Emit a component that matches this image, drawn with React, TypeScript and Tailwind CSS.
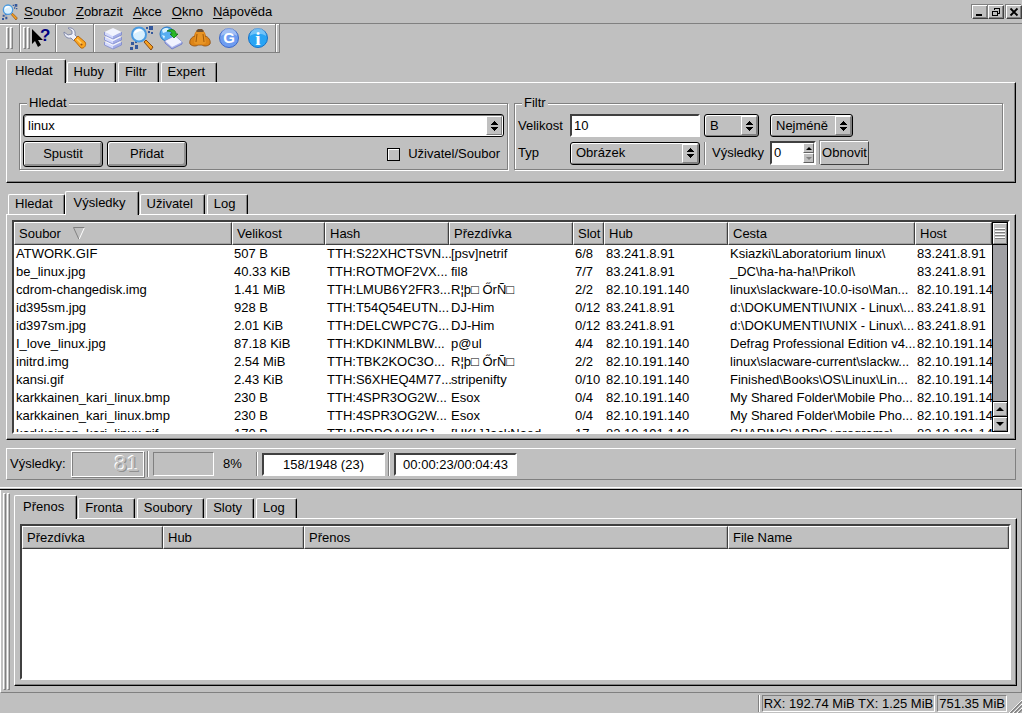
import { useState } from 'react';
import type { ReactNode } from 'react';

const sunken = 'border border-t-[#808080] border-l-[#808080] border-r-white border-b-white';
const frame =
  'border-2 border-t-[#404040] border-l-[#404040] border-r-white border-b-white bg-white';
const headCell =
  'h-[23px] border border-t-white border-l-white border-r-[#404040] border-b-[#404040] bg-[#c0c0c0] pl-1 text-left align-middle font-normal shadow-[inset_-1px_-1px_0_#a0a0a0] overflow-hidden';

const results = [
  ['ATWORK.GIF', '507 B', 'TTH:S22XHCTSVN...', '[psv]netrif', '6/8', '83.241.8.91', 'Ksiazki\\Laboratorium linux\\', '83.241.8.91'],
  ['be_linux.jpg', '40.33 KiB', 'TTH:ROTMOF2VX...', 'fil8', '7/7', '83.241.8.91', '_DC\\ha-ha-ha!\\Prikol\\', '83.241.8.91'],
  ['cdrom-changedisk.img', '1.41 MiB', 'TTH:LMUB6Y2FR3...', 'R¦þ□ ŐrÑ□', '2/2', '82.10.191.140', 'linux\\slackware-10.0-iso\\Man...', '82.10.191.14'],
  ['id395sm.jpg', '928 B', 'TTH:T54Q54EUTN...', 'DJ-Him', '0/12', '83.241.8.91', 'd:\\DOKUMENTI\\UNIX - Linux\\...', '83.241.8.91'],
  ['id397sm.jpg', '2.01 KiB', 'TTH:DELCWPC7G...', 'DJ-Him', '0/12', '83.241.8.91', 'd:\\DOKUMENTI\\UNIX - Linux\\...', '83.241.8.91'],
  ['I_love_linux.jpg', '87.18 KiB', 'TTH:KDKINMLBW...', 'p@ul', '4/4', '82.10.191.140', 'Defrag Professional Edition v4...', '82.10.191.14'],
  ['initrd.img', '2.54 MiB', 'TTH:TBK2KOC3O...', 'R¦þ□ ŐrÑ□', '2/2', '82.10.191.140', 'linux\\slacware-current\\slackw...', '82.10.191.14'],
  ['kansi.gif', '2.43 KiB', 'TTH:S6XHEQ4M77...', 'stripenifty', '0/10', '82.10.191.140', 'Finished\\Books\\OS\\Linux\\Lin...', '82.10.191.14'],
  ['karkkainen_kari_linux.bmp', '230 B', 'TTH:4SPR3OG2W...', 'Esox', '0/4', '82.10.191.140', 'My Shared Folder\\Mobile Pho...', '82.10.191.14'],
  ['karkkainen_kari_linux.bmp', '230 B', 'TTH:4SPR3OG2W...', 'Esox', '0/4', '82.10.191.140', 'My Shared Folder\\Mobile Pho...', '82.10.191.14'],
  ['karkkainen_kari_linux.gif', '170 B', 'TTH:PDPOAKHSJ...', '[UKL]JackNaed', '17', '82.10.191.140', 'SHARING\\APPS+programs\\...', '82.10.191.14'],
];

function Tabs({ label, items, initial = 0 }: { label: string; items: string[]; initial?: number }) {
  const [active, setActive] = useState(initial);
  return (
    <div role="tablist" aria-label={label} className="relative -mb-px flex h-6 items-end">
      {items.map((item, i) => (
        <button
          key={item}
          role="tab"
          aria-selected={i === active}
          onClick={() => setActive(i)}
          className={
            i === active
              ? '-mr-px h-6 rounded-t-xs border border-b-0 border-t-white border-l-white border-r-black bg-[#c0c0c0] pr-3 pb-0.5 pl-2 shadow-[inset_-1px_0_0_#808080]'
              : 'mb-px ml-0.5 h-5 rounded-t-xs border border-b-0 border-t-white border-l-white border-r-black pr-[11px] pb-px pl-1.5 shadow-[inset_-1px_0_0_#808080]'
          }
        >
          {item}
        </button>
      ))}
    </div>
  );
}

function Pane({ children, className = '' }: { children: ReactNode; className?: string }) {
  return (
    <div className={`border border-t-white border-l-white border-r-black border-b-black shadow-[inset_-1px_-1px_0_#808080] ${className}`}>
      {children}
    </div>
  );
}

function Group({ title, children }: { title: string; children: ReactNode }) {
  return (
    <fieldset className="min-w-0 border border-[#808080] px-[3px] pb-0.5 shadow-[inset_1px_1px_0_#fff,1px_1px_0_#fff]">
      <legend className="ml-1 bg-[#c0c0c0] px-0.5 leading-[18px]">{title}</legend>
      <div className="flex flex-col gap-1 pt-0.5">{children}</div>
    </fieldset>
  );
}

function Arrows() {
  return (
    <span className="pointer-events-none absolute top-0.5 right-0.5 bottom-0.5 flex w-4 items-center justify-center border border-t-white border-l-white border-r-[#808080] border-b-[#808080] bg-[#c0c0c0]">
      <svg width="8" height="10" viewBox="0 0 8 10" shapeRendering="crispEdges">
        <path d="M4 0L8 4H0zM0 6H8L4 10z" />
      </svg>
    </span>
  );
}

function Select({ label, options, width }: { label: string; options: string[]; width: string }) {
  return (
    <span className={`relative h-[23px] ${width}`}>
      <select
        aria-label={label}
        className="h-full w-full appearance-none rounded-[3px] border border-black bg-[#c0c0c0] pl-[5px] shadow-[inset_1px_1px_0_#fff,inset_-1px_-1px_0_#808080]"
      >
        {options.map(o => <option key={o}>{o}</option>)}
      </select>
      <Arrows />
    </span>
  );
}

function Grip() {
  return (
    <span className="flex gap-px">
      <span className="w-[3px] border border-t-white border-l-white border-r-[#808080] border-b-[#808080]" />
      <span className="w-[3px] border border-t-white border-l-white border-r-[#808080] border-b-[#808080]" />
    </span>
  );
}

function Sep() {
  return <span className="w-0.5 self-stretch border-r border-l border-r-white border-l-[#808080]" />;
}

function LensIcon({ size }: { size: number }) {
  return (
    <svg width={size} height={size} viewBox="0 0 24 24">
      <path d="M19 0h4v4h-4zM18 5h2v2h-2zM21 6h2v2h-2zM16 1h2v2h-2zM1 16h3v3H1zM5 19h3v4H5zM0 21h3v3H0zM5 15h2v2H5z" fill="#34589c" />
      <path d="M14 16l2-2 7 7-2 3z" fill="#f5a020" stroke="#8a4a10" />
      <circle cx="9" cy="8.500" r="7" fill="#d8f0ff" stroke="#4a9ae0" strokeWidth="2" />
      <path d="M4 8a5 5 0 0 1 5-5c2 0 3 1 3 2-4 0-6 2-8 3z" fill="#fff" />
    </svg>
  );
}

function HelpIcon() {
  return (
    <svg width="20" height="20" viewBox="0 0 20 20" className="-ml-1">
      <path d="M1 1v15l3-3 3 6 3-2-3-5h5z" fill="#000" />
      <text x="9" y="13" fontSize="17" fontWeight="bold" fontFamily="Liberation Sans" fill="#000080">?</text>
    </svg>
  );
}

function WrenchIcon() {
  return (
    <svg width="24" height="24" viewBox="0 0 24 24">
      <path d="M5 2c4-1 8 2 7 7l3 3-4 3-3-3C4 13 1 10 1 6l4 3 4-1V5z" fill="#eef0fa" stroke="#8088a8" />
      <path d="M11 14l4-4 7 6c2 3-1 7-4 6z" fill="#fba51e" stroke="#b86a10" />
      <path d="M14 13l5 5" stroke="#ffd070" strokeWidth="1.500" />
      <circle cx="18.500" cy="18.500" r="1" fill="#985010" />
    </svg>
  );
}

function StackIcon() {
  return (
    <svg width="20" height="24" viewBox="0 0 20 24">
      {[12, 7, 2].map(y => (
        <g key={y} transform={`translate(0 ${y})`}>
          <path d="M1.500 4v3l8.500 4V8z" fill="#d4daff" />
          <path d="M18.500 4v3L10 11V8z" fill="#a4aee8" />
          <path d="M10 0l8.500 4L10 8 1.500 4z" fill="#f2f4ff" />
          <path d="M1.500 4v3l8.500 4 8.500-4V4" fill="none" stroke="#7c88cc" strokeWidth=".8" />
        </g>
      ))}
    </svg>
  );
}

function GlobeIcon() {
  return (
    <svg width="24" height="24" viewBox="0 0 24 24">
      <circle cx="8" cy="8" r="7" fill="#58aef0" stroke="#2878c8" />
      <path d="M3 4c3-3 6-2 7-1L7 6 4 7zM3 9l3 1-1 3z" fill="#d8f2ff" />
      <path d="M6 15l10-5 7 6v2l-10 5-7-6z" fill="#a8b2ea" stroke="#7480c8" />
      <path d="M6 15l10-5 7 6-10 5z" fill="#f0f2ff" />
      <path d="M8 5c5-3 9-1 9 3h2l-4 4-4-4h2c0-2-2-3-5-3z" fill="#28b828" stroke="#107010" strokeWidth=".8" />
    </svg>
  );
}

function HatIcon() {
  return (
    <svg width="22" height="20" viewBox="0 0 22 20">
      <path d="M5 10c0-5 2-7 4-8h4c2 1 4 3 4 8z" fill="#d87c12" />
      <path d="M6 8C2 9 0 13 1 16c3 3 7 2 8 1h4c1 1 5 2 8-1 1-3-1-7-5-8z" fill="#dc8418" stroke="#8c4808" strokeWidth=".8" />
      <path d="M6 8c1-4 2-5 3-5h4c1 0 2 1 3 5l1 7c-3 2-9 2-12 0z" fill="#e89424" />
      <path d="M8 6L7 14M14 6l1 8" stroke="#a05808" />
      <path d="M7 3l2-2h4l2 2-1 1H8z" fill="#705030" />
    </svg>
  );
}

function RoundIcon({ letter }: { letter: 'G' | 'i' }) {
  const info = letter === 'i';
  return (
    <svg width="22" height="22" viewBox="0 0 22 22">
      <circle cx="11" cy="11" r="9.500" fill={info ? '#28a4f4' : '#6e9cf0'} stroke={info ? '#1470c8' : '#3c68c8'} />
      <path d="M3 9a8 8 0 0 1 16 0c-4-3-12-3-16 0z" fill="#fff" opacity=".35" />
      <text
        x="11" y={info ? 18 : 16} textAnchor="middle" fill="#fff" fontWeight="bold"
        fontSize={info ? 19 : 15} fontFamily={info ? 'Liberation Serif' : 'Liberation Sans'}
      >
        {letter}
      </text>
    </svg>
  );
}

const winButton =
  'flex h-3.5 w-4 items-center justify-center border border-t-white border-l-white border-r-[#404040] border-b-[#404040] shadow-[inset_-1px_-1px_0_#808080,-1px_-1px_0_#808080]';

function MenuBar() {
  return (
    <header className="flex h-6 items-center border-b border-[#808080] pl-0.5">
      <LensIcon size={16} />
      <nav className="ml-1.5 flex flex-1 gap-2.5">
        {['Soubor', 'Zobrazit', 'Akce', 'Okno', 'Nápověda'].map(m => (
          <button key={m}><span className="underline underline-offset-2">{m[0]}</span>{m.slice(1)}</button>
        ))}
      </nav>
      <div className="flex">
        <button aria-label="Minimize" className={winButton}>
          <svg width="10" height="10" shapeRendering="crispEdges"><path d="M1 7h6v2H1z" /></svg>
        </button>
        <button aria-label="Restore" className={winButton}>
          <svg width="10" height="10" shapeRendering="crispEdges" fill="none" stroke="#000">
            <path d="M3.500 3V1.500h5v5H7M3 1h6M1.500 4.500h5v4h-5zM1 4h6" />
          </svg>
        </button>
        <button aria-label="Close" className={`${winButton} ml-0.5`}>
          <svg width="10" height="10"><path d="M1.500 1.500l7 7M8.500 1.500l-7 7" stroke="#000" strokeWidth="1.800" /></svg>
        </button>
      </div>
    </header>
  );
}

function ToolBar() {
  const tool = 'flex w-[29px] items-center justify-center';
  return (
    <div className="flex">
      <div className="flex h-[29px] items-stretch border-r border-b border-[#808080] pl-1.5 shadow-[inset_0_1px_0_#fff]">
        <span className="flex py-[3px]"><Grip /></span>
        <span className="ml-1.5 flex"><Sep /></span>
        <span className="ml-0.5 flex py-[3px]"><Grip /></span>
        <button aria-label="What's This" className="flex w-[25px] items-center justify-center"><HelpIcon /></button>
        <Sep />
        <button aria-label="Settings" className="flex w-9 items-center justify-center"><WrenchIcon /></button>
        <Sep />
        <div className="flex px-[3px]">
          <button aria-label="Hubs" className={tool}><StackIcon /></button>
          <button aria-label="Search" className={tool}><LensIcon size={24} /></button>
          <button aria-label="Public hubs" className={tool}><GlobeIcon /></button>
          <button aria-label="Spy" className={tool}><HatIcon /></button>
          <button aria-label="Google" className={tool}><RoundIcon letter="G" /></button>
          <button aria-label="About" className={tool}><RoundIcon letter="i" /></button>
        </div>
        <Sep />
        <span className="w-0.5" />
      </div>
    </div>
  );
}

function SearchForm() {
  const push =
    'h-[26px] w-20 rounded-[3px] border border-black shadow-[inset_1px_1px_0_#fff,inset_-2px_-2px_0_#909090]';
  return (
    <Pane className="grid grid-cols-2 gap-1.5 px-3 pt-[11px] pb-3">
      <Group title="Hledat">
        <div className="relative flex h-[23px]">
          <input
            aria-label="Hledat"
            defaultValue="linux"
            className="w-full rounded-[3px] border border-black bg-white px-1 shadow-[inset_1px_1px_0_#808080]"
          />
          <Arrows />
        </div>
        <div className="flex items-center">
          <button className={push}>Spustit</button>
          <button className={`${push} ml-1`}>Přidat</button>
          <label className="mr-1 ml-auto flex items-center gap-2">
            <input
              type="checkbox"
              className="h-[13px] w-[13px] appearance-none border border-black bg-[#c0c0c0] shadow-[inset_1px_1px_0_#fff] checked:bg-[#606060]"
            />
            Uživatel/Soubor
          </label>
        </div>
      </Group>
      <Group title="Filtr">
        <div className="flex items-center">
          <label htmlFor="size" className="w-13">Velikost</label>
          <input
            id="size"
            defaultValue="10"
            className={`mr-1 h-[23px] w-[130px] pl-0.5 ${frame}`}
          />
          <Select label="Jednotka" options={['B', 'KiB', 'MiB', 'GiB']} width="w-[55px]" />
          <span className="w-[11px]" />
          <Select label="Omezení" options={['Nejméně', 'Nejvíce']} width="w-[83px]" />
        </div>
        <div className="flex items-center">
          <span className="w-13">Typ</span>
          <Select label="Typ" options={['Obrázek', 'Zvuk', 'Video']} width="w-[130px]" />
          <span className="ml-1 flex h-[23px]"><Sep /></span>
          <label htmlFor="count" className="ml-1.5 w-[58px]">Výsledky</label>
          <span className={`flex h-6 w-[46px] ${frame}`}>
            <input id="count" defaultValue="0" className="w-0 flex-1 pl-0.5 outline-none" />
            <span className="flex w-[11px] flex-col bg-[#c0c0c0]">
              <button aria-label="Více" className="flex flex-1 items-center justify-center border border-t-white border-l-white border-r-[#606060] border-b-[#606060]">
                <svg width="6" height="3"><path d="M0 3h6L3 0z" /></svg>
              </button>
              <button aria-label="Méně" className="flex flex-1 items-center justify-center border border-t-white border-l-white border-r-[#606060] border-b-[#606060]">
                <svg width="6" height="3"><path d="M0 0h6L3 3z" fill="#808080" /></svg>
              </button>
            </span>
          </span>
          <button className="ml-1 h-6 w-[49px] border border-t-white border-l-white border-r-[#404040] border-b-[#404040] shadow-[-1px_-1px_0_#808080]">
            Obnovit
          </button>
        </div>
      </Group>
    </Pane>
  );
}

function ResultsTable() {
  return (
    <Pane className="p-[5px]">
      <div className={`flex h-[214px] ${frame}`}>
        <div className="flex-1 overflow-hidden">
          <table className="w-full table-fixed border-separate border-spacing-0 whitespace-nowrap">
            <colgroup>
              <col className="w-[218px]" />
              <col className="w-[93px]" />
              <col className="w-[124px]" />
              <col className="w-[124px]" />
              <col className="w-[31px]" />
              <col className="w-[124px]" />
              <col className="w-[187px]" />
              <col />
            </colgroup>
            <thead>
              <tr>
                <th className={headCell}>
                  <span className="flex items-center gap-3">
                    Soubor
                    <svg width="12" height="13" fill="none">
                      <path d="M11.500 .5L6 12.500" stroke="#fff" />
                      <path d="M11.500 .5H.5L6 12.500" stroke="#808080" />
                    </svg>
                  </span>
                </th>
                {['Velikost', 'Hash', 'Přezdívka', 'Slot', 'Hub', 'Cesta', 'Host'].map(h => (
                  <th key={h} className={headCell}>{h}</th>
                ))}
              </tr>
            </thead>
            <tbody>
              {results.map((row, i) => (
                <tr key={i}>
                  {row.map((cell, j) => (
                    <td key={j} className="h-[18px] pl-0.5 leading-[18px]">{cell}</td>
                  ))}
                </tr>
              ))}
            </tbody>
          </table>
        </div>
        <div className="flex w-4 flex-col border border-black bg-[#a0a0a4]">
          <span className="flex h-[21px] flex-col items-center justify-center gap-px border border-t-white border-l-white border-r-[#808080] border-b-[#808080] bg-[#c0c0c0]">
            {[0, 1, 2, 3].map(n => (
              <span key={n} className="h-0.5 w-2.5 border-t border-b border-t-white border-b-[#808080]" />
            ))}
          </span>
          <span className="flex-1 border-t border-black" />
          <button aria-label="Nahoru" className="flex h-[15px] items-center justify-center border-t border-black bg-[#c0c0c0] shadow-[inset_1px_1px_0_#fff,inset_-1px_-1px_0_#808080]">
            <svg width="8" height="4"><path d="M0 4h8L4 0z" /></svg>
          </button>
          <button aria-label="Dolů" className="flex h-[15px] items-center justify-center border-t border-black bg-[#c0c0c0] shadow-[inset_1px_1px_0_#fff,inset_-1px_-1px_0_#808080]">
            <svg width="8" height="4"><path d="M0 0h8L4 4z" /></svg>
          </button>
        </div>
      </div>
    </Pane>
  );
}

function ResultsBar() {
  return (
    <div className="mt-2 flex h-8 items-center border border-t-white border-l-white border-r-[#808080] border-b-[#808080] pl-[3px]">
      <span className="w-[61px]">Výsledky:</span>
      <span className="flex h-[26px] w-[73px] items-center justify-end border border-white pr-1 text-[22px] leading-6 text-[#c0c0c0] shadow-[inset_1px_1px_0_#808080,1px_1px_0_#808080] [text-shadow:-1px_-1px_0_#fff,1px_1px_0_#909090]">
        81
      </span>
      <span className="ml-[3px] flex h-[26px]"><Sep /></span>
      <span className={`ml-1 h-6 w-[61px] ${sunken}`} />
      <span className="ml-[9px] w-[33px]">8%</span>
      <span className="flex h-6"><Sep /></span>
      <input aria-label="Huby" readOnly defaultValue="158/1948 (23)" className={`ml-1 h-[23px] w-[123px] text-center ${frame}`} />
      <span className="ml-[3px] flex h-6"><Sep /></span>
      <input aria-label="Čas" readOnly defaultValue="00:00:23/00:04:43" className={`ml-1 h-[23px] w-[123px] text-center ${frame}`} />
    </div>
  );
}

function Transfers() {
  return (
    <section className="flex flex-1 border-r border-b border-l border-r-[#808080] border-b-[#808080] border-l-white pr-1 pl-0.5">
      <div className="flex pt-[3px] pb-0.5"><Grip /></div>
      <div className="ml-1 flex flex-1 flex-col pt-[5px] pb-1.5">
        <Tabs label="Přenosy" items={['Přenos', 'Fronta', 'Soubory', 'Sloty', 'Log']} />
        <Pane className="flex flex-1 flex-col p-[5px]">
          <div className={`flex-1 overflow-hidden ${frame}`}>
            <table className="w-full table-fixed border-separate border-spacing-0">
              <colgroup>
                <col className="w-[141px]" />
                <col className="w-[141px]" />
                <col className="w-[424px]" />
                <col />
              </colgroup>
              <thead>
                <tr>
                  {['Přezdívka', 'Hub', 'Přenos', 'File Name'].map(h => (
                    <th key={h} className={headCell}>{h}</th>
                  ))}
                </tr>
              </thead>
            </table>
          </div>
        </Pane>
      </div>
    </section>
  );
}

export default function App() {
  return (
    <div className="flex min-h-screen flex-col bg-[#c0c0c0] font-['Liberation_Sans',Arial,sans-serif] text-[13px] leading-4 text-black">
      <MenuBar />
      <ToolBar />
      <main className="px-1.5 pt-1.5">
        <Tabs label="Hledání" items={['Hledat', 'Huby', 'Filtr', 'Expert']} />
        <SearchForm />
        <div className="h-2" />
        <Tabs label="Výsledky" items={['Hledat', 'Výsledky', 'Uživatel', 'Log']} initial={1} />
        <ResultsTable />
        <ResultsBar />
      </main>
      <div className="mt-[7px] h-[3px] border-t border-b border-t-white border-b-black" />
      <Transfers />
      <footer className="flex h-5 items-center justify-end">
        <span className="mr-0.5 flex h-[17px]"><Sep /></span>
        <span className={`h-[17px] px-px leading-[15px] whitespace-nowrap ${sunken}`}>RX: 192.74 MiB TX: 1.25 MiB</span>
        <span className={`mr-0.5 ml-0.5 h-[17px] px-px leading-[15px] whitespace-nowrap ${sunken}`}>751.35 MiB</span>
        <svg width="13" height="13" className="self-end">
          <path d="M0 13L13 0M4 13L13 4M8 13L13 8" stroke="#fff" />
          <path d="M1.500 13L13 1.500M5.500 13L13 5.500M9.500 13L13 9.500" stroke="#808080" strokeWidth="1.500" />
        </svg>
      </footer>
    </div>
  );
}
